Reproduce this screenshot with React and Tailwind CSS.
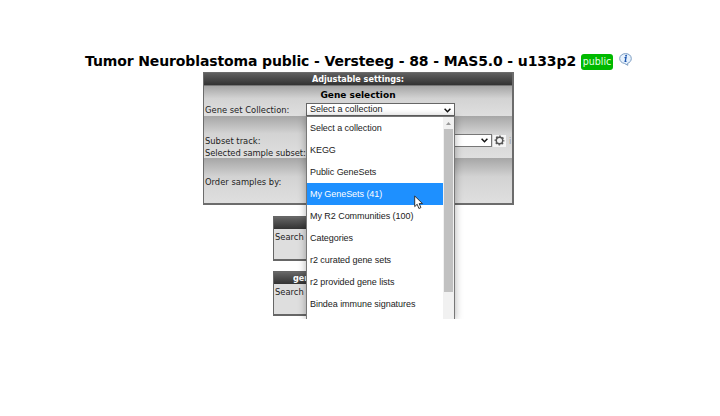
const options = [
  'Select a collection',
  'KEGG',
  'Public GeneSets',
  'My GeneSets (41)',
  'My R2 Communities (100)',
  'Categories',
  'r2 curated gene sets',
  'r2 provided gene lists',
  'Bindea immune signatures',
];

function Chevron() {
  return (
    <svg className="h-[5px] w-[7px] shrink-0" viewBox="0 0 7 5" fill="none" stroke="#111" strokeWidth="1.5">
      <path d="M0.6 0.8 3.5 3.7 6.4 0.8" />
    </svg>
  );
}

function InfoIcon() {
  return (
    <svg className="h-[13px] w-[13px]" viewBox="0 0 13 13" fill="none">
      <path d="M6.6 0.6c3.3 0 5.7 2.1 5.7 4.9 0 2.4-1.6 4.2-3.7 4.8L8.8 12.3 5.4 10.4C2.6 10 0.7 8 0.7 5.5 0.7 2.7 3.3 0.6 6.6 0.6z" fill="#e6f1fc" stroke="#7d9dc2" strokeWidth="1" />
      <circle cx="7.1" cy="2.7" r="0.95" fill="#1d56b0" />
      <path d="M5.5 4.7h1.5L6.2 8.4h1.3" stroke="#1d56b0" strokeWidth="1.3" />
    </svg>
  );
}

function GearIcon() {
  return (
    <svg className="h-[11px] w-[11px]" viewBox="0 0 11 11" fill="none" stroke="#555">
      <circle cx="5.5" cy="5.5" r="3.2" strokeWidth="1.4" />
      <circle cx="5.5" cy="5.5" r="4.3" strokeWidth="1.2" strokeDasharray="1.7 1.677" strokeDashoffset="0.85" />
    </svg>
  );
}

function Pointer() {
  return (
    <svg className="absolute top-[78px] left-[107px] h-[15px] w-[10px]" viewBox="0 0 10 15">
      <path d="M0.7 1v10.6l2.5-2.3 1.7 4.2 2-.9-1.7-4h3.3z" fill="#fff" stroke="#222" strokeWidth="0.9" />
    </svg>
  );
}

function Dropdown() {
  return (
    <div className="absolute top-[13px] left-0 z-10 flex h-[203px] w-[149px] overflow-hidden border-x border-t border-[#777] bg-white font-['Liberation_Sans',Arial,sans-serif] text-[9px] text-[#222]">
      <ul className="w-[136px] shrink-0">
        {options.map((label, i) => (
          <li
            key={label}
            className={
              i === 3
                ? 'flex h-[22px] items-center bg-[#1e90ff] pt-[2px] pl-[3px] text-white'
                : 'flex h-[22px] items-center pt-[2px] pl-[3px]'
            }
          >
            <span className="tracking-[-0.05px] whitespace-nowrap">{label}</span>
          </li>
        ))}
      </ul>
      <div className="flex flex-1 flex-col items-center bg-[#f1f1f1]">
        <div className="flex h-[12px] shrink-0 items-center">
          <svg className="h-[3px] w-[5px]" viewBox="0 0 5 3"><path d="M0 3 2.5 0 5 3z" fill="#999" /></svg>
        </div>
        <div className="h-[163px] w-[9px] shrink-0 bg-[#c1c1c1]" />
      </div>
      <Pointer />
    </div>
  );
}

function SearchBox({ title }) {
  return (
    <section className="h-[45px] w-[170px] border-2 border-l border-[#666] bg-[#dedede]">
      <h2 className="h-[11px] w-full bg-linear-to-b from-[#626262] to-[#333] pl-[19px] text-[9px] leading-[11px] font-bold text-white">
        <span className="block w-[13px] overflow-hidden">{title}</span>
      </h2>
      <p className="mt-[2px] w-[32px] overflow-hidden pl-px text-[9.3px] leading-[11px] whitespace-nowrap">Search t</p>
    </section>
  );
}

const band = 'bg-linear-to-b from-[#a6a6a6] via-[#d3d3d3] via-42% to-[#dfdfdf]';

export default function App() {
  return (
    <main className="h-[416px] w-[720px] overflow-hidden bg-white pt-[53px] font-['DejaVu_Sans_Condensed','DejaVu_Sans',Verdana,sans-serif] text-[#222]">
      <header className="flex h-[19px] items-start pl-[85px]">
        <h1 className="w-[496px] shrink-0 font-['DejaVu_Sans',Verdana,sans-serif] text-[14px] leading-[17px] font-bold tracking-[-0.12px] whitespace-nowrap text-black">
          Tumor Neuroblastoma public - Versteeg - 88 - MAS5.0 - u133p2
        </h1>
        <span className="mt-px flex h-[16px] w-[32px] items-center justify-center rounded-[3px] bg-[#00b900] text-[10.5px] text-[#e4ffe4]">public</span>
        <span className="ml-[6px]"><InfoIcon /></span>
      </header>

      <div className="relative h-[247px] overflow-hidden">
        <div className="absolute top-[45px] left-[306px] z-[5] h-[202px] w-[149px] shadow-[0_0_7px_1px_rgba(0,0,0,0.26)]" />
        <section className="ml-[203px] h-[133px] w-[311px] border border-r-2 border-b-2 border-[#6c6c6c] text-[9.3px]">
          <h2 className="h-[12px] bg-linear-to-b from-[#606060] to-[#333] text-center text-[9px] leading-[13px] font-bold text-white">Adjustable settings:</h2>
          <div className={'h-[31px] border-t border-[#777] ' + band}>
            <h3 className="pt-[3px] pb-px text-center font-['DejaVu_Sans',Verdana,sans-serif] text-[9px] leading-[13px] font-bold text-black">Gene selection</h3>
            <div className="flex h-[13px] items-center">
              <span className="w-[102px] pl-px whitespace-nowrap">Gene set Collection:</span>
              <div className="relative h-[13px] w-[149px]">
                <div className="flex h-[13px] items-center justify-between border border-[#666] bg-white pt-px pr-[3px] pl-[3px] font-['Liberation_Sans',Arial,sans-serif] text-[9px]">
                  <span>Select a collection</span>
                  <Chevron />
                </div>
                <Dropdown />
              </div>
            </div>
          </div>
          <div className={'h-[42px] pt-[18px] ' + band}>
            <div className="flex h-[13px] items-center">
              <span className="w-[150px] pl-px">Subset track:</span>
              <div className="flex h-[13px] w-[138px] items-center justify-end border border-[#777] bg-white pr-[3px]"><Chevron /></div>
              <span className="ml-px flex h-[12px] w-[13px] items-center justify-center bg-[#f5f5f5]"><GearIcon /></span>
              <span className="ml-[3px] w-[3px] overflow-hidden text-[#999]">i</span>
            </div>
            <p className="h-[11px] pl-px leading-[11px] tracking-[-0.08px]">Selected sample subset:</p>
          </div>
          <div className={'h-[45px] pt-[18px] pl-px leading-[12px] ' + band}>Order samples by:</div>
        </section>
        <div className="mt-[11px] ml-[273px] flex flex-col gap-[10px]">
          <SearchBox title="" />
          <SearchBox title="gen" />
        </div>
      </div>
    </main>
  );
}
